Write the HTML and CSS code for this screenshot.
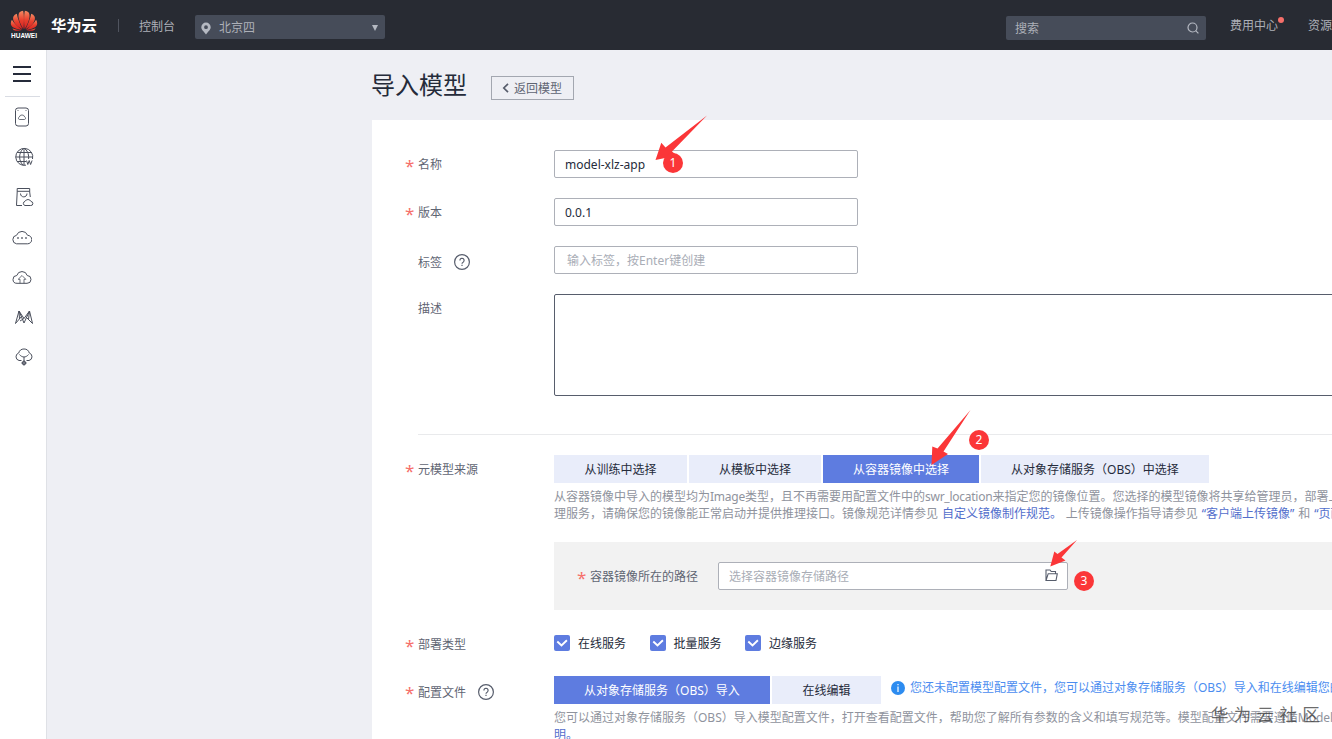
FILE: index.html
```html
<!DOCTYPE html>
<html lang="zh-CN">
<head>
  <meta charset="UTF-8">
  <meta name="viewport" content="width=device-width, initial-scale=1">
  <title>导入模型</title>
  <link rel="stylesheet" href="styles.css">
</head>
<body>
  <!-- Top bar -->
  <header class="topbar">
    <div class="logo">
      <svg width="28" height="22" viewBox="0 0 28 22">
        <defs>
          <linearGradient id="petal" x1="0" y1="0" x2="0" y2="1">
            <stop offset="0" stop-color="#f58a62"/>
            <stop offset="0.5" stop-color="#e8402e"/>
            <stop offset="1" stop-color="#d42020"/>
          </linearGradient>
        </defs>
        <g fill="url(#petal)">
          <path d="M13.500 19C8.500 12 7.500 5 9.300 2.500Q11 .8 13.100 .8C14.300 5 14 13 13.500 19Z"/>
          <path d="M14.500 19C19.500 12 20.500 5 18.700 2.500Q17 .8 14.900 .8C13.700 5 14 13 14.500 19Z"/>
          <path d="M12.600 19.300C4.500 15.500 2.300 10 3.300 6.800Q4.500 4.500 6.800 3.800C7.500 8 9.800 14 12.600 19.300Z"/>
          <path d="M15.400 19.300C23.500 15.500 25.700 10 24.700 6.800Q23.500 4.500 21.200 3.800C20.500 8 18.200 14 15.400 19.300Z"/>
          <path d="M12 20C4 19 1 16.500 .8 13.800Q.8 11.500 1.900 9.800C4 13.500 8 17 12 20Z"/>
          <path d="M16 20C24 19 27 16.500 27.200 13.800Q27.200 11.500 26.100 9.800C24 13.500 20 17 16 20Z"/>
          <path d="M11.800 20.800H5.500Q3.200 20.300 2.500 18.400Q7 19.900 11.800 20.800Z"/>
          <path d="M16.200 20.800H22.500Q24.800 20.300 25.500 18.400Q21 19.900 16.200 20.800Z"/>
        </g>
      </svg>
      <span class="logo-text">HUAWEI</span>
    </div>
    <span class="brand">华为云</span>
    <span class="separator"></span>
    <a class="console">控制台</a>
    <div class="region">
      <svg width="10" height="13" viewBox="0 0 10 13">
        <path fill="#b5b9c2" fill-rule="evenodd" d="M5 .5A4.700 4.700 0 0 0 .3 5.200C.3 7.800 3 9.500 5 12.500C7 9.500 9.700 7.800 9.700 5.200A4.700 4.700 0 0 0 5 .5ZM5 3.300A1.900 1.900 0 1 1 5 7.100A1.900 1.900 0 0 1 5 3.300Z"/>
      </svg>
      <span class="region-name">北京四</span>
      <span class="caret"></span>
    </div>
    <div class="search">
      <span>搜索</span>
      <svg width="12" height="12" viewBox="0 0 12 12" fill="none" stroke="#b5b9c2" stroke-width="1.200">
        <circle cx="5.500" cy="5.500" r="4.500"/>
        <path d="M8.700 8.700L11.400 11.400"/>
      </svg>
    </div>
    <a class="billing">费用中心<i class="dot"></i></a>
    <a class="resource">资源</a>
  </header>

  <div class="body">
    <!-- Service shortcuts -->
    <aside class="sidebar">
      <div class="menu"><i></i><i></i><i></i></div>
      <ul>
        <li>
          <svg width="20" height="20" viewBox="0 0 20 20">
            <rect x="1.500" y="1" width="13" height="18" rx="2.500"/>
            <path d="M3.500 3.500h1M11.500 3.500h1M5.500 12.500h5a1.300 1.300 0 0 0 .2-2.500a2.800 2.800 0 0 0-5.400 0a1.300 1.300 0 0 0 .2 2.500Z" stroke-width=".8"/>
          </svg>
        </li>
        <li>
          <svg width="20" height="20" viewBox="0 0 20 20">
            <path d="M12 18.200A8.500 8.500 0 1 1 18.500 12M10 1.500v17M1.500 10h17M3 5.500h14M3 14.500h9M9 18C4.500 14 4.500 6 9 1.800M11 1.800C14 4.500 15 8 14.600 12"/>
            <path d="M12.500 13.500l1.300 4l1.400-4l1.400 4l1.500-4"/>
          </svg>
        </li>
        <li>
          <svg width="20" height="20" viewBox="0 0 20 20">
            <path d="M8 18.500H2.500L3.200 5V1.500H15.700V5L16.300 10M3.200 4.300h12.500M6.500 6.500c0 4.500 6.500 4.500 6.500 0"/>
            <path d="M11 18.500h5.700a2 2 0 0 0 .3-4a3.300 3.300 0 0 0-6-.1a2.100 2.100 0 0 0 0 4.100Z"/>
          </svg>
        </li>
        <li class="cloud">
          <svg width="20" height="20" viewBox="0 0 20 20">
            <path d="M4.500 16.800H15.500A4 4 0 0 0 15.600 8.300A5.900 5.900 0 0 0 4.500 8.300A4.300 4.300 0 0 0 4.500 16.800Z"/>
            <path stroke-width="1.600" d="M5.200 11h1.600M9.200 11h1.600M13.200 11h1.600"/>
          </svg>
        </li>
        <li class="cloud">
          <svg width="20" height="20" viewBox="0 0 20 20">
            <path d="M5 16.300H15A3.800 3.800 0 0 0 15.200 8.500A5.400 5.400 0 0 0 4.800 8.500A3.900 3.900 0 0 0 5 16.300Z"/>
            <path d="M8 16.300V12.300H6.200L10 8.500L13.800 12.300H12V16.300" stroke-width=".8"/>
          </svg>
        </li>
        <li>
          <svg width="20" height="20" viewBox="0 0 20 20">
            <path d="M1.500 16.500L5 4L10 11.500L15.500 4L18.500 16.500M1.500 16.500L7.500 9.500M5 4L10 16L15.500 4M10 11.500L6 14M12 10L18.500 16.500M5 4L5.500 12M15.500 4L14.500 12.500"/>
          </svg>
        </li>
        <li>
          <svg width="20" height="20" viewBox="0 0 20 20">
            <path d="M7.500 13.500H5A3.900 3.900 0 0 1 4.700 6A5.500 5.500 0 0 1 15.300 6A3.900 3.900 0 0 1 15 13.500H12.500M5.500 7.500C6.500 9 8.500 10 10 10S13.500 9 14.500 7.500M10 10v4"/>
            <circle cx="10" cy="16" r="1.800"/>
            <path d="M7.500 16h5M10 13.500v5"/>
          </svg>
        </li>
      </ul>
    </aside>

    <main class="main">
      <div class="page-head">
        <h1>导入模型</h1>
        <button class="back">
          <svg width="7" height="10" viewBox="0 0 7 10" fill="none" stroke="#575d6c" stroke-width="1.700"><path d="M6 .8L1.800 5L6 9.200"/></svg>
          <span>返回模型</span>
        </button>
      </div>

      <!-- Import form -->
      <form class="card">
        <div class="row">
          <label class="label required">名称</label>
          <div class="input">model-xlz-app</div>
        </div>
        <div class="row">
          <label class="label required">版本</label>
          <div class="input">0.0.1</div>
        </div>
        <div class="row">
          <label class="label label-low">标签
            <svg class="help" viewBox="0 0 16 16"><circle cx="8" cy="8" r="7.400"/><path d="M5.900 6.400a2.100 2.100 0 1 1 3.200 1.800q-1.100.6-1.100 1.600M8 10.800v1.300"/></svg>
          </label>
          <div class="input placeholder tag-input">输入标签，按Enter键创建</div>
        </div>
        <div class="row">
          <label class="label">描述</label>
          <div class="textarea"></div>
        </div>

        <div class="divider"></div>

        <div class="row row-source">
          <label class="label required">元模型来源</label>
          <div class="control">
            <div class="tabs">
              <span class="tab tab-train">从训练中选择</span>
              <span class="tab tab-template">从模板中选择</span>
              <span class="tab tab-image active">从容器镜像中选择</span>
              <span class="tab tab-obs">从对象存储服务（OBS）中选择</span>
            </div>
            <p class="hint">从容器镜像中导入的模型均为<span class="latin">Image</span>类型，且不再需要用配置文件中的<span class="latin">swr_location</span>来指定您的镜像位置。您选择的模型镜像将共享给管理员，部署上<br>理服务，请确保您的镜像能正常启动并提供推理接口。镜像规范详情参见 <a>自定义镜像制作规范。</a> 上传镜像操作指导请参见 <a>“客户端上传镜像”</a> 和 <a>“页面</a></p>
            <div class="panel">
              <label class="label required">容器镜像所在的路径</label>
              <div class="input placeholder path-input">
                选择容器镜像存储路径
                <svg width="13" height="13" viewBox="0 0 13 13" fill="none" stroke="#575d6c" stroke-width="1.100"><path d="M1 11.500V1H5L6.200 2.500H10.500V4.700M1 11.500L3.200 4.700H12.300L11 11.500Z"/></svg>
              </div>
            </div>
          </div>
        </div>

        <div class="row row-deploy">
          <label class="label required">部署类型</label>
          <div class="checks">
            <span class="check"><svg viewBox="0 0 16 16"><path d="M3.300 6.500L7.500 10.500L12.900 5.200"/></svg><span>在线服务</span></span>
            <span class="check"><svg viewBox="0 0 16 16"><path d="M3.300 6.500L7.500 10.500L12.900 5.200"/></svg><span>批量服务</span></span>
            <span class="check"><svg viewBox="0 0 16 16"><path d="M3.300 6.500L7.500 10.500L12.900 5.200"/></svg><span>边缘服务</span></span>
          </div>
        </div>

        <div class="row">
          <label class="label required label-low">配置文件
            <svg class="help" viewBox="0 0 16 16"><circle cx="8" cy="8" r="7.400"/><path d="M5.900 6.400a2.100 2.100 0 1 1 3.200 1.800q-1.100.6-1.100 1.600M8 10.800v1.300"/></svg>
          </label>
          <div class="control">
            <div class="tabs">
              <span class="tab tab-import active">从对象存储服务（OBS）导入</span>
              <span class="tab tab-edit">在线编辑</span>
              <span class="notice">
                <svg width="14" height="14" viewBox="0 0 14 14"><circle cx="7" cy="7" r="7" fill="#2d8cf0"/><path d="M7 3v1.300M7 5.500v5.500" stroke="#fff" stroke-width="1.200"/></svg>
                您还未配置模型配置文件，您可以通过对象存储服务（OBS）导入和在线编辑您的
              </span>
            </div>
            <p class="hint">您可以通过对象存储服务（OBS）导入模型配置文件，打开查看配置文件，帮助您了解所有参数的含义和填写规范等。模型配置文件需要遵循ModelArts<br><a>明。</a></p>
          </div>
        </div>
      </form>
    </main>
  </div>

  <!-- Step annotations -->
  <svg class="arrows" width="1332" height="739" viewBox="0 0 1332 739" fill="#fb3638">
    <path d="M707 115.500L665.500 147.500L661.300 142.700L655.500 160L677 155.500L672 151.500Z"/>
    <path d="M970.500 410L937.500 448.500L932.300 446.500L931.500 465L948 454L943.500 451.500Z"/>
    <path d="M1077 540L1057.500 554L1054.300 551.500L1050.300 566.500L1065.500 560.500L1061.500 557.500Z"/>
  </svg>
  <span class="step step-1">1</span>
  <span class="step step-2">2</span>
  <span class="step step-3">3</span>
  <span class="watermark">华为云社区</span>
</body>
</html>
```

FILE: styles.css
```css
/* Global */
* {
  box-sizing: border-box;
}
body {
  margin: 0;
  width: 100%;
  height: 739px;
  position: relative;
  overflow: hidden;
  font-family: "Noto Sans", "Noto Sans CJK SC", sans-serif;
  font-size: 12px;
  line-height: 18px;
  color: #5f6573;
  background: #eeeff4;
  white-space: nowrap;
}

/* Top bar */
.topbar {
  display: flex;
  height: 50px;
  background: #282b33;
  color: #adb0b8;
}
.topbar > * {
  flex-shrink: 0;
}
.logo {
  display: flex;
  flex-direction: column;
  align-items: center;
  width: 28px;
  margin: 10px 0 0 10px;
}
.logo-text {
  font: bold 6.500px/8px "Liberation Sans", sans-serif;
  color: #fff;
}
.brand {
  margin: 13px 0 0 13px;
  width: 46px;
  font-size: 15.300px;
  line-height: 24px;
  font-weight: bold;
  color: #fff;
}
.separator {
  width: 1px;
  height: 13px;
  margin: 19px 0 0 21px;
  background: #50545f;
}
.console {
  width: 37px;
  margin: 18px 0 0 20px;
}
.region {
  display: flex;
  align-items: center;
  width: 190px;
  height: 24px;
  margin: 15px 0 0 19px;
  padding: 0 7px 0 6px;
  border-radius: 2px;
  background: #464c59;
}
.region svg {
  margin-top: 2px;
}
.region-name {
  flex: 1;
  margin: 2px 0 0 8px;
}
.caret {
  margin-top: 2px;
  border: 3.500px solid transparent;
  border-top: 6px solid #b5b9c2;
  border-bottom: 0;
}
.search {
  display: flex;
  align-items: center;
  justify-content: space-between;
  width: 200px;
  height: 24px;
  margin: 16px 0 0 621px;
  padding: 2px 7px 0 9px;
  border-radius: 2px;
  background: #464c59;
}
.search svg {
  margin-top: -2px;
}
.billing {
  position: relative;
  width: 49px;
  margin: 17px 0 0 24px;
}
.dot {
  position: absolute;
  top: 0;
  right: -5px;
  width: 6px;
  height: 6px;
  border-radius: 50%;
  background: #f66f6a;
}
.resource {
  margin: 17px 0 0 29px;
}

/* Sidebar */
.body {
  display: flex;
  height: 689px;
}
.sidebar {
  flex: 0 0 47px;
  border-right: 1px solid #dfe1e6;
  background: #fff;
}
.menu {
  display: flex;
  flex-direction: column;
  gap: 5px;
  height: 47px;
  margin: 0 6px 0 5px;
  padding: 16px 9px 0 8px;
  border-bottom: 1px solid #d9dce3;
}
.menu i {
  height: 2px;
  background: #252b3a;
}
.sidebar ul {
  display: flex;
  flex-direction: column;
  gap: 20px;
  margin: 0;
  padding: 10px 0 0 14px;
  list-style: none;
}
.sidebar li {
  height: 20px;
}
.sidebar .cloud {
  margin-left: -2px;
}
.sidebar svg {
  display: block;
  fill: none;
  stroke: #4a4f5c;
  stroke-width: 1;
}

/* Page heading */
.main {
  flex: 1;
  min-width: 0;
  padding-left: 325px;
}
.page-head {
  display: flex;
  height: 70px;
}
h1 {
  width: 98px;
  margin: 17px 22px 0 -1px;
  font-size: 24px;
  line-height: 36px;
  font-weight: normal;
  color: #252b3a;
}
.back {
  display: flex;
  align-items: center;
  gap: 5px;
  width: 83px;
  height: 24px;
  margin-top: 26px;
  padding: 0 0 0 10px;
  border: 1px solid #a3a7b0;
  background: none;
  font: inherit;
  color: #5f6573;
}
.back span {
  padding-top: 2px;
}

/* Form */
.card {
  height: 619px;
  padding: 30px 0 0 46px;
  overflow: hidden;
  background: #fff;
}
.row {
  display: flex;
  margin-bottom: 20px;
}
.label {
  display: flex;
  flex: 0 0 136px;
  align-items: center;
  height: 28px;
  padding-top: 2px;
}
.label-low {
  padding-top: 5px;
}
.required::before {
  content: "*";
  width: 13px;
  height: 18px;
  margin-left: -13px;
  font-size: 17px;
  line-height: 17px;
  padding-top: 1px;
  color: #f66f6a;
}
.help {
  width: 16px;
  height: 16px;
  margin: -1px 0 0 12px;
  fill: none;
  stroke: #575d6c;
  stroke-width: 1.200;
}
.input {
  display: flex;
  align-items: center;
  width: 304px;
  height: 28px;
  padding: 2px 10px 0;
  border: 1px solid #adb0b8;
  border-radius: 2px;
  background: #fff;
  color: #252b3a;
}
.input.placeholder {
  color: #a9adb6;
}
.input.tag-input {
  padding-left: 12px;
}
.textarea {
  flex: 0 0 900px;
  height: 102px;
  border: 1px solid #575d6c;
  border-radius: 2px;
}
.divider {
  height: 1px;
  margin: 38px 0 20px;
  background: #e9eaec;
}

/* Tabs and hints */
.tabs {
  display: flex;
  gap: 2px;
}
.tab {
  flex-shrink: 0;
  height: 28px;
  line-height: 30px;
  text-align: center;
  background: #e9edfa;
  color: #252b3a;
}
.tab.active {
  background: #5e7ce0;
  color: #fff;
}
.tab-train {
  width: 133px;
}
.tab-template {
  width: 132px;
}
.tab-image {
  width: 156px;
}
.tab-obs {
  width: 228px;
}
.tab-import {
  width: 216px;
}
.tab-edit {
  width: 109px;
}
.hint {
  margin: 5px 0 0;
  line-height: 17px;
  word-spacing: 0.800px;
  color: #8f939d;
}
.hint a {
  color: #526ecc;
}
.latin {
  letter-spacing: -0.250px;
}
.panel {
  display: flex;
  align-items: center;
  width: 900px;
  height: 68px;
  margin-top: 20px;
  padding-left: 36px;
  background: #f2f2f2;
}
.panel .label {
  flex-basis: 128px;
}
.path-input {
  justify-content: space-between;
  width: 350px;
  padding-right: 9px;
}
.path-input svg {
  margin-top: -3px;
}

/* Deploy types */
.row-deploy {
  margin-bottom: 18px;
}
.row-deploy,
.row-deploy .label {
  height: 28px;
}
.checks {
  display: flex;
  gap: 23.500px;
  height: 26px;
  align-items: center;
}
.check {
  display: flex;
  align-items: center;
  gap: 8px;
  color: #252b3a;
}
.check span {
  padding-top: 2px;
}
.check svg {
  width: 16px;
  height: 16px;
  border-radius: 2px;
  background: #5e7ce0;
  fill: none;
  stroke: #fff;
  stroke-width: 1.900;
}
.notice {
  display: flex;
  align-items: center;
  gap: 5px;
  height: 24px;
  margin-left: 8px;
  color: #4b8df0;
}

/* Annotations drawn over the page */
.arrows {
  position: absolute;
  top: 0;
  left: 0;
}
.step {
  position: absolute;
  width: 20px;
  height: 20px;
  border-radius: 50%;
  line-height: 20px;
  text-align: center;
  background: #fb3638;
  color: #fff;
}
.step-1 {
  top: 153px;
  left: 663px;
}
.step-2 {
  top: 430px;
  left: 969px;
}
.step-3 {
  top: 571px;
  left: 1074px;
}
.watermark {
  position: absolute;
  top: 702px;
  left: 1211px;
  font-size: 17.500px;
  line-height: 24px;
  letter-spacing: 5.300px;
  color: rgba(60, 60, 60, 0.75);
}
```
